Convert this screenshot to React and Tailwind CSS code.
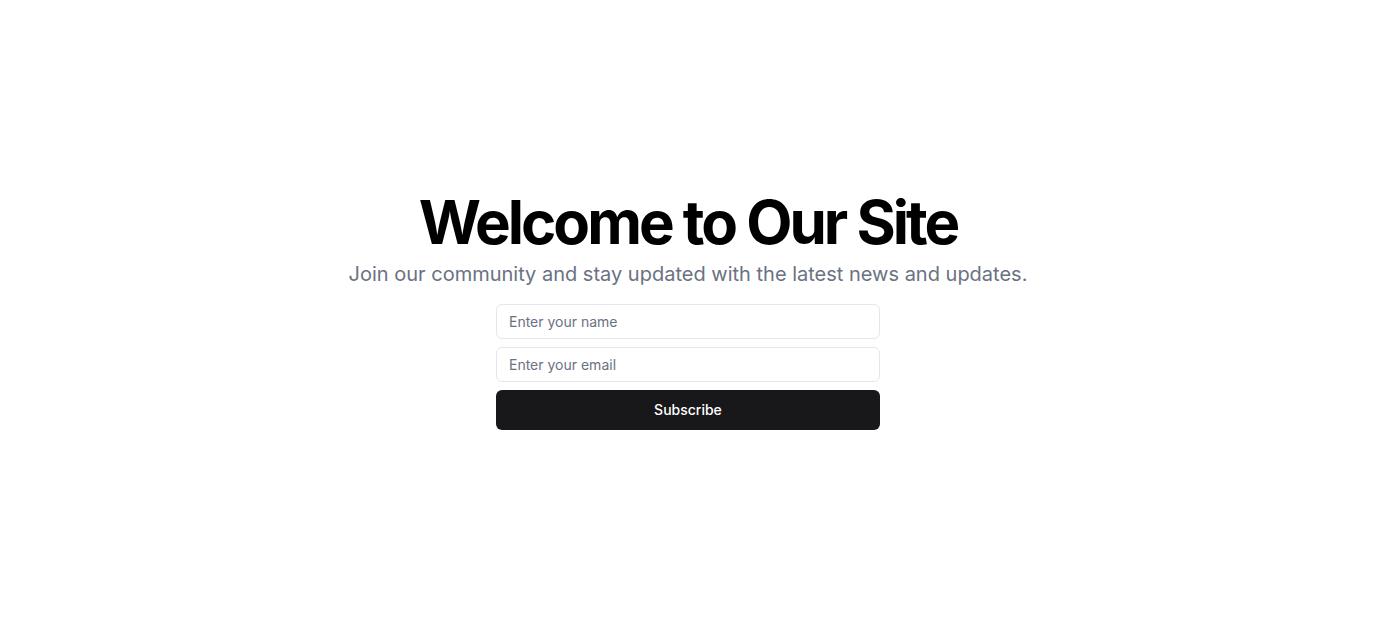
export default function App() {
  return (
    <div className="min-h-screen w-full bg-white flex items-center justify-center" style={{ fontFamily: 'Inter, "Noto Sans", sans-serif' }}>
      <div className="flex flex-col items-center text-center">
        <h1 className="text-6xl leading-none font-bold tracking-tighter text-black">Welcome to Our Site</h1>
        <p className="mt-2 text-xl leading-7 text-gray-500">Join our community and stay updated with the latest news and updates.</p>
        <form className="mt-4 w-96 flex flex-col gap-2" onSubmit={(e) => e.preventDefault()}>
          <input
            type="text"
            placeholder="Enter your name"
            className="h-[35px] w-full rounded-md border border-gray-200 bg-white px-3 text-sm text-gray-900 placeholder:text-gray-500 outline-none"
          />
          <input
            type="email"
            placeholder="Enter your email"
            className="h-[35px] w-full rounded-md border border-gray-200 bg-white px-3 text-sm text-gray-900 placeholder:text-gray-500 outline-none"
          />
          <button type="submit" className="h-10 w-full rounded-md bg-[#18181b] text-sm font-medium text-white">
            Subscribe
          </button>
        </form>
      </div>
    </div>
  );
}
